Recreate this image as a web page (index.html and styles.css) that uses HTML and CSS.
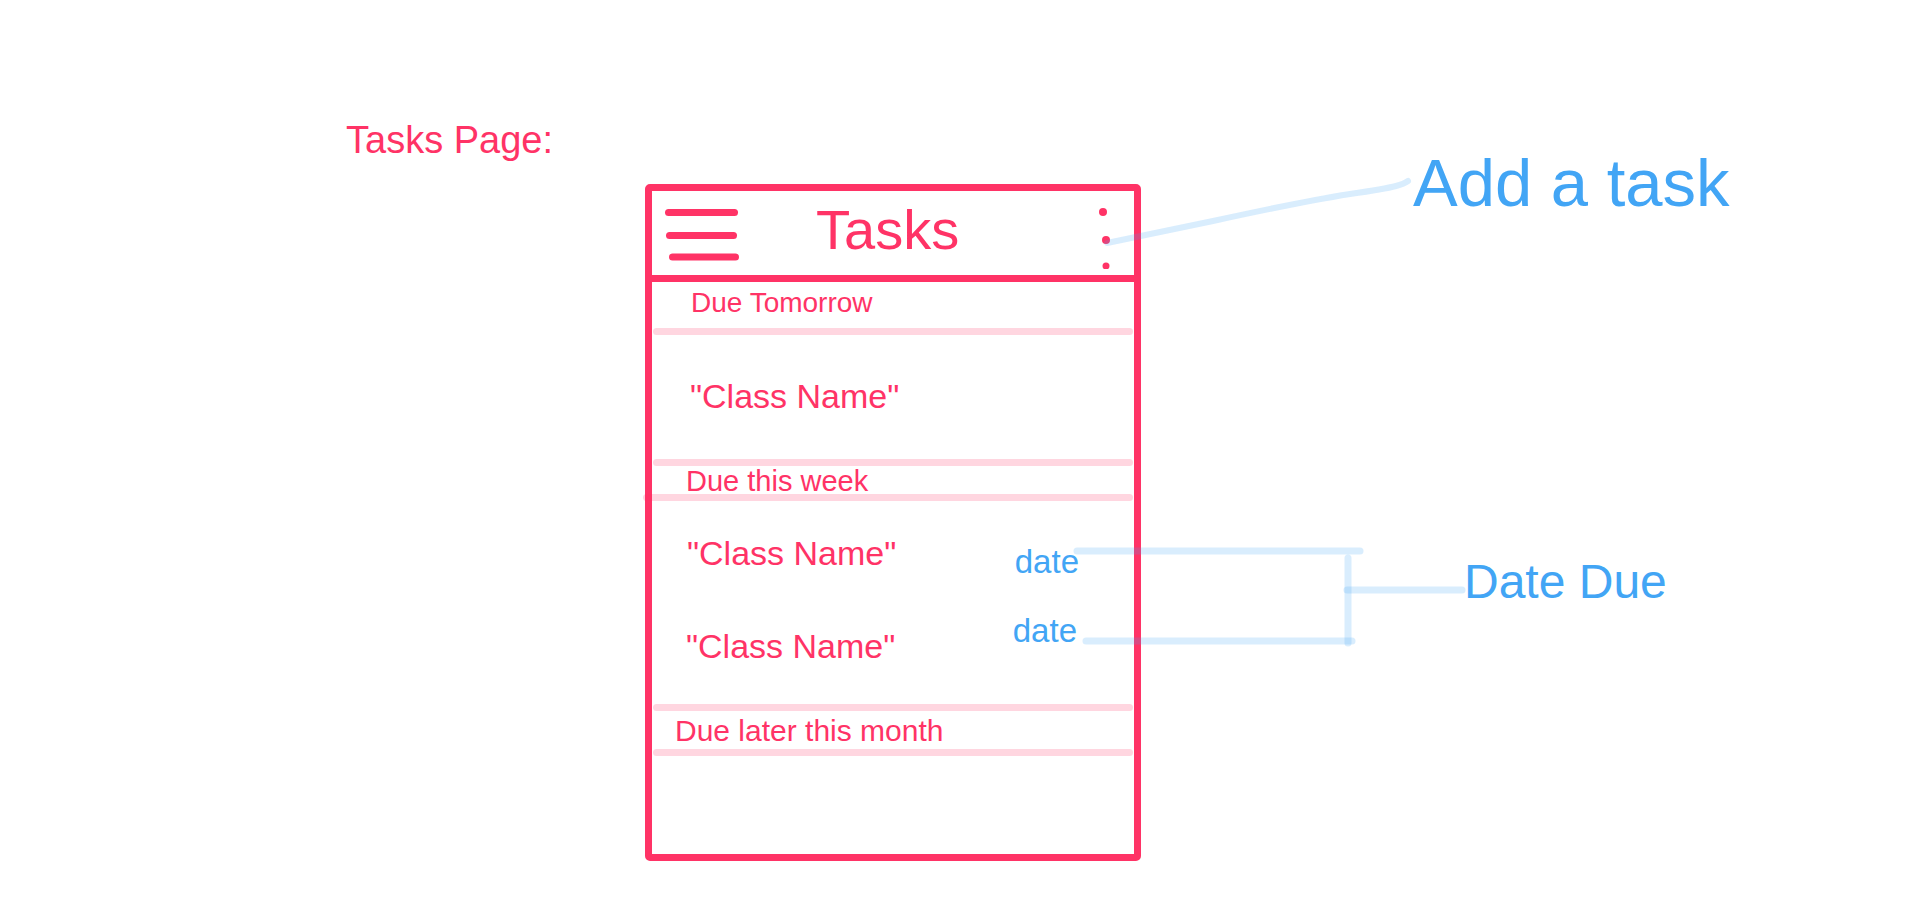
FILE: index.html
```html
<!DOCTYPE html>
<html lang="en">
<head>
<meta charset="utf-8">
<title>Tasks Page sketch</title>
<link rel="stylesheet" href="styles.css">
</head>
<body>
<div class="canvas">
  <div class="page-label">Tasks Page:</div>

  <div class="phone">
    <div class="bar">
      <svg class="burger" width="80" height="60" viewBox="0 0 80 60" aria-hidden="true">
        <line x1="6.5" y1="9.5" x2="72.5" y2="9.5"/>
        <line x1="7.5" y1="32.5" x2="71.5" y2="32.5"/>
        <line x1="10.5" y1="54" x2="73.5" y2="54"/>
      </svg>
      <div class="bar-title">Tasks</div>
      <svg class="kebab" width="14" height="72" viewBox="0 0 14 72" aria-hidden="true">
        <circle cx="6" cy="15" r="4"/>
        <circle cx="9" cy="43" r="4"/>
        <circle cx="9" cy="69" r="3.5"/>
      </svg>
    </div>

    <div class="list">
      <div class="group-title g-tomorrow">Due Tomorrow</div>
      <div class="rule r1"></div>
      <div class="task t1">"Class Name"</div>
      <div class="rule r2"></div>
      <div class="group-title g-week">Due this week</div>
      <div class="rule r3"></div>
      <div class="task-row row1">
        <div class="task">"Class Name"</div>
        <div class="date">date</div>
      </div>
      <div class="task-row row2">
        <div class="task">"Class Name"</div>
        <div class="date">date</div>
      </div>
      <div class="rule r4"></div>
      <div class="group-title g-month">Due later this month</div>
      <div class="rule r5"></div>
    </div>
  </div>

  <svg class="notes" width="1920" height="915" viewBox="0 0 1920 915" aria-hidden="true">
    <path d="M1107 243 L1213 221 Q1300 202 1350 194 Q1385 189 1396 186 Q1404 184 1408 181"/>
    <line x1="1077" y1="551" x2="1360" y2="551"/>
    <line x1="1348" y1="558" x2="1348" y2="643"/>
    <line x1="1347" y1="590" x2="1462" y2="590"/>
    <line x1="1086" y1="641" x2="1352" y2="641"/>
  </svg>

  <div class="note note-add">Add a task</div>
  <div class="note note-due">Date Due</div>
</div>
</body>
</html>
```

FILE: styles.css
```css
html, body {
  margin: 0;
  padding: 0;
  background: #ffffff;
}

body {
  font-family: "Liberation Sans", Arial, sans-serif;
  color: #ff3366;
}

.canvas {
  position: relative;
  width: 1920px;
  height: 915px;
  overflow: hidden;
  background: #ffffff;
}

.page-label {
  position: absolute;
  left: 346px;
  top: 121px;
  font-size: 38px;
  line-height: 1;
  white-space: nowrap;
}

/* phone frame */
.phone {
  position: absolute;
  left: 645px;
  top: 184px;
  width: 496px;
  height: 677px;
  box-sizing: border-box;
  border: 7px solid #ff3366;
  border-radius: 5px;
  background: #ffffff;
}

.bar {
  height: 84px;
  border-bottom: 7px solid #ff3366;
  display: flex;
  align-items: center;
  padding-left: 10px;
  padding-right: 23px;
}

.burger {
  flex: none;
  display: block;
}

.burger line {
  stroke: #ff3366;
  stroke-width: 7;
  stroke-linecap: round;
}

.bar-title {
  margin-left: 74px;
  margin-bottom: 7px;
  font-size: 56px;
  line-height: 1;
}

.kebab {
  flex: none;
  display: block;
  margin-left: auto;
}

.kebab circle {
  fill: #ff3366;
}

/* list */
.list {
  display: flex;
  flex-direction: column;
}

.rule {
  height: 7px;
  margin: 0 1px;
  border-radius: 4px;
  background: rgba(255, 51, 102, 0.2);
}

.group-title {
  line-height: 1;
  white-space: nowrap;
}

.g-tomorrow {
  font-size: 28px;
  margin-top: 7px;
  padding-left: 39px;
}

.r1 { margin-top: 11px; }

.task {
  font-size: 34px;
  line-height: 1;
  white-space: nowrap;
}

.t1 {
  margin-top: 44px;
  padding-left: 38px;
}

.r2 { margin-top: 46px; }

.g-week {
  font-size: 29px;
  margin-top: 1px;
  padding-left: 34px;
}

.r3 {
  margin-top: -2px;
  margin-left: -9px;
}

.task-row {
  display: flex;
  align-items: flex-start;
}

.date {
  margin-left: auto;
  font-size: 33px;
  line-height: 1;
  color: #42a5f5;
}

.row1 { margin-top: 35px; }
.row1 .task { padding-left: 35px; }
.row1 .date { margin-top: 9px; margin-right: 55px; }

.row2 { margin-top: 36px; }
.row2 .task { padding-left: 34px; margin-top: 15px; }
.row2 .date { margin-right: 57px; }

.r4 { margin-top: 41px; }

.g-month {
  font-size: 30px;
  margin-top: 5px;
  padding-left: 23px;
}

.r5 { margin-top: 3px; }

/* annotations */
.notes {
  position: absolute;
  left: 0;
  top: 0;
  pointer-events: none;
}

.notes path,
.notes line {
  fill: none;
  stroke: #42a5f5;
  stroke-opacity: 0.2;
  stroke-linecap: round;
  stroke-linejoin: round;
}

.notes path { stroke-width: 6; }
.notes line { stroke-width: 7; }

.note {
  position: absolute;
  color: #42a5f5;
  line-height: 1;
  white-space: nowrap;
}

.note-add {
  left: 1413px;
  top: 149px;
  font-size: 67px;
}

.note-due {
  left: 1464px;
  top: 558px;
  font-size: 48px;
}
```
